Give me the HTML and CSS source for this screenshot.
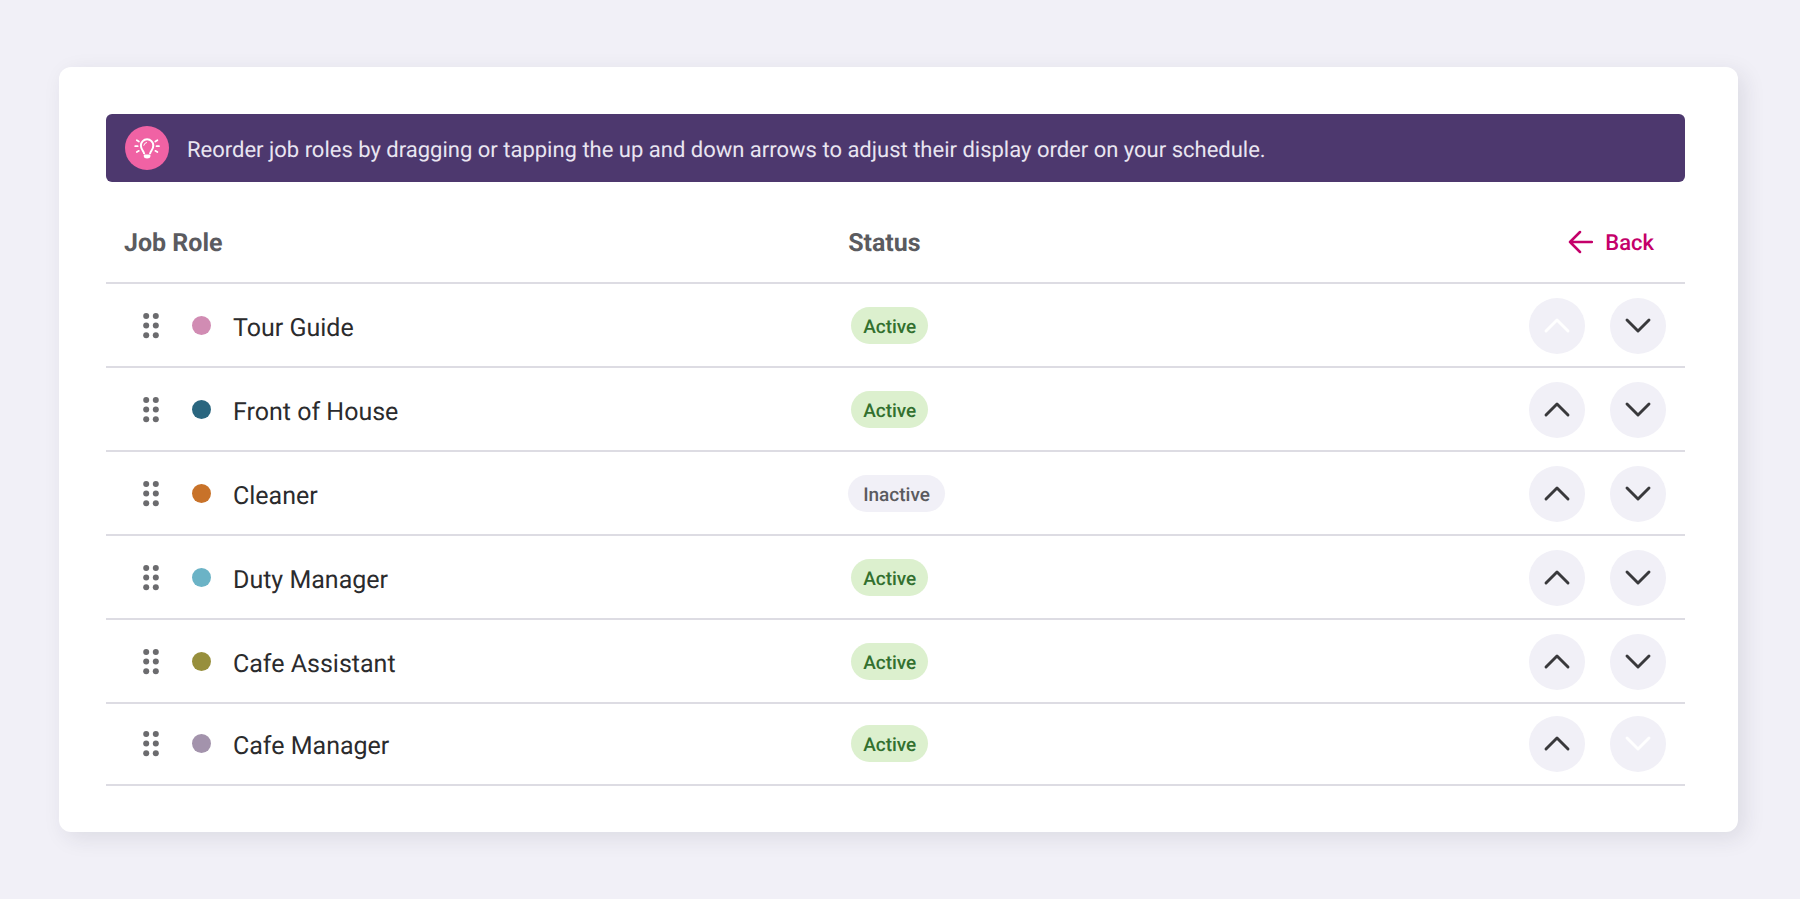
FILE: index.html
```html
<!DOCTYPE html>
<html lang="en">
<head>
<meta charset="utf-8">
<meta name="viewport" content="width=device-width, initial-scale=1">
<title>Job roles</title>
<link rel="stylesheet" href="styles.css">
</head>
<body>
<svg class="sprite" aria-hidden="true">
  <symbol id="up" viewBox="0 0 56 56"><path d="M17 33 28 22 39 33"/></symbol>
  <symbol id="down" viewBox="0 0 56 56"><path d="M17 22 28 33 39 22"/></symbol>
  <symbol id="grip" viewBox="0 0 16 26"><circle cx="3.200" cy="3" r="3"/><circle cx="12.800" cy="3" r="3"/><circle cx="3.200" cy="12.600" r="3"/><circle cx="12.800" cy="12.600" r="3"/><circle cx="3.200" cy="22.200" r="3"/><circle cx="12.800" cy="22.200" r="3"/></symbol>
</svg>
<main class="card">
  <p class="banner">
    <svg class="banner-icon" viewBox="0 0 44 44" aria-hidden="true">
      <circle class="disc" cx="22" cy="22" r="22"/>
      <path class="bulb" d="M19.200 28C19 25 15.900 24 15.900 19.500A6.200 6.200 0 0 1 28.300 19.500C28.300 24 25.200 25 25 28"/>
      <path class="glint" d="M18.800 19.300A3.300 3.300 0 0 1 21.600 16.500"/>
      <path class="ray" d="M10.200 20.200H12.700M31.500 20.200H34M11.800 14.200 13.900 15.500M32.400 14.200 30.300 15.500M11.800 26 13.900 24.800M32.400 26 30.300 24.800"/>
      <path class="base" d="M18.800 28.600H25.400V30.500Q25.200 32.400 22.100 32.400T18.800 30.500Z"/>
    </svg>
    <span class="banner-text">Reorder job roles by dragging or tapping the up and down arrows to adjust their display order on your schedule.</span>
  </p>
  <table class="roles">
    <thead>
      <tr>
        <th class="col-role" scope="col">Job Role</th>
        <th class="col-status" scope="col">Status</th>
        <td class="col-actions"><a class="back" href="#"><svg class="back-icon" viewBox="0 0 26 24" aria-hidden="true"><path d="M25 12H3M13 2 3 12 13 22"/></svg><span class="back-label">Back</span></a></td>
      </tr>
    </thead>
    <tbody>
      <tr>
        <td><div class="role"><svg class="grip"><use href="#grip"/></svg><span class="dot pink"></span><span class="name">Tour Guide</span></div></td>
        <td><span class="pill active">Active</span></td>
        <td><div class="moves"><button class="move" type="button" aria-label="Move Tour Guide up" disabled><svg><use href="#up"/></svg></button><button class="move" type="button" aria-label="Move Tour Guide down"><svg><use href="#down"/></svg></button></div></td>
      </tr>
      <tr>
        <td><div class="role"><svg class="grip"><use href="#grip"/></svg><span class="dot teal"></span><span class="name">Front of House</span></div></td>
        <td><span class="pill active">Active</span></td>
        <td><div class="moves"><button class="move" type="button" aria-label="Move Front of House up"><svg><use href="#up"/></svg></button><button class="move" type="button" aria-label="Move Front of House down"><svg><use href="#down"/></svg></button></div></td>
      </tr>
      <tr>
        <td><div class="role"><svg class="grip"><use href="#grip"/></svg><span class="dot orange"></span><span class="name">Cleaner</span></div></td>
        <td><span class="pill inactive">Inactive</span></td>
        <td><div class="moves"><button class="move" type="button" aria-label="Move Cleaner up"><svg><use href="#up"/></svg></button><button class="move" type="button" aria-label="Move Cleaner down"><svg><use href="#down"/></svg></button></div></td>
      </tr>
      <tr>
        <td><div class="role"><svg class="grip"><use href="#grip"/></svg><span class="dot sky"></span><span class="name">Duty Manager</span></div></td>
        <td><span class="pill active">Active</span></td>
        <td><div class="moves"><button class="move" type="button" aria-label="Move Duty Manager up"><svg><use href="#up"/></svg></button><button class="move" type="button" aria-label="Move Duty Manager down"><svg><use href="#down"/></svg></button></div></td>
      </tr>
      <tr>
        <td><div class="role"><svg class="grip"><use href="#grip"/></svg><span class="dot olive"></span><span class="name">Cafe Assistant</span></div></td>
        <td><span class="pill active">Active</span></td>
        <td><div class="moves"><button class="move" type="button" aria-label="Move Cafe Assistant up"><svg><use href="#up"/></svg></button><button class="move" type="button" aria-label="Move Cafe Assistant down"><svg><use href="#down"/></svg></button></div></td>
      </tr>
      <tr>
        <td><div class="role"><svg class="grip"><use href="#grip"/></svg><span class="dot mauve"></span><span class="name">Cafe Manager</span></div></td>
        <td><span class="pill active">Active</span></td>
        <td><div class="moves"><button class="move" type="button" aria-label="Move Cafe Manager up"><svg><use href="#up"/></svg></button><button class="move" type="button" aria-label="Move Cafe Manager down" disabled><svg><use href="#down"/></svg></button></div></td>
      </tr>
    </tbody>
  </table>
</main>
</body>
</html>
```
FILE: styles.css
```css
* { box-sizing: border-box; }

body {
  margin: 0;
  padding: 67px 62px 67px 59px;
  background: #f1f0f7;
  color: #2b2b2d;
  font-family: Roboto, "Liberation Sans", sans-serif;
  font-size: 25px;
  text-rendering: geometricPrecision;
}

.sprite { position: absolute; width: 0; height: 0; }

.card {
  padding: 47px 53px 46px 47px;
  border-radius: 12px;
  background: #fff;
  box-shadow: 6px 6px 22px rgba(40, 35, 60, 0.1);
}

.banner {
  display: flex;
  align-items: center;
  gap: 18px;
  min-height: 68px;
  margin: 0;
  padding: 12px 19px;
  border-radius: 6px;
  background: #4d386e;
  color: #e9e5f1;
  font-size: 22px;
  line-height: 26px;
}

.banner-icon { flex: none; width: 44px; height: 44px; }
.banner-text { padding-top: 6px; }
.disc { fill: #f062a4; }
.bulb { fill: none; stroke: #fff; stroke-width: 2; }
.glint { fill: none; stroke: #fff; stroke-width: 1; stroke-linecap: round; }
.ray { fill: none; stroke: #fff; stroke-width: 1.700; stroke-linecap: round; }
.base { fill: #fff; }

.roles {
  width: 100%;
  border-collapse: separate;
  border-spacing: 0;
  table-layout: fixed;
}

.roles th,
.roles td {
  padding: 14px 0 12px;
  border-bottom: 2px solid #dddce3;
  text-align: left;
  vertical-align: middle;
}

.roles thead th,
.roles thead td {
  padding: 47px 0 23px;
  color: #5b5b5f;
  font-weight: 700;
  line-height: 30px;
}

.roles tbody tr:last-child td { padding: 12px 0; }

.roles thead .col-role { width: 47%; padding-left: 18px; }
.col-status { width: 23%; }
.roles thead .col-actions { padding: 43px 31px 23px 0; }

.back {
  display: flex;
  align-items: center;
  justify-content: flex-end;
  gap: 12px;
  color: #c4006a;
  font-size: 22px;
  font-weight: 500;
  text-decoration: none;
}

.back-label { padding-top: 4px; }

.back-icon {
  width: 26px;
  height: 24px;
  fill: none;
  stroke: currentColor;
  stroke-width: 2.500;
  stroke-linecap: round;
  stroke-linejoin: round;
}

.role { display: flex; align-items: center; padding-left: 37px; }
.grip { flex: none; width: 16px; height: 26px; fill: #6b6b6e; }
.dot { flex: none; width: 19px; height: 19px; margin: 0 22px 2px 33px; border-radius: 50%; }
.name { padding-top: 6px; line-height: 30px; }

.pink { background: #d18cb3; }
.teal { background: #2a667f; }
.orange { background: #c87229; }
.sky { background: #6bb3c6; }
.olive { background: #978f3c; }
.mauve { background: #a393ac; }

.pill {
  display: block;
  width: fit-content;
  margin-bottom: 2px;
  padding: 3px 12px 0;
  border-radius: 19px;
  font-size: 19px;
  font-weight: 500;
  line-height: 34px;
}

.active { margin-left: 3px; background: #dcf0ce; color: #33702f; }
.inactive { padding-right: 15px; padding-left: 15px; background: #f1f0f7; color: #5b5b5f; }

.moves { display: flex; justify-content: flex-end; gap: 25px; padding-right: 19px; }

.move {
  width: 56px;
  height: 56px;
  padding: 0;
  border: 0;
  border-radius: 50%;
  background: #f1f0f7;
  color: #39393c;
}

.move:disabled { color: #fff; }

.move svg {
  display: block;
  width: 56px;
  height: 56px;
  fill: none;
  stroke: currentColor;
  stroke-width: 2.900;
  stroke-linecap: round;
  stroke-linejoin: round;
}
```
